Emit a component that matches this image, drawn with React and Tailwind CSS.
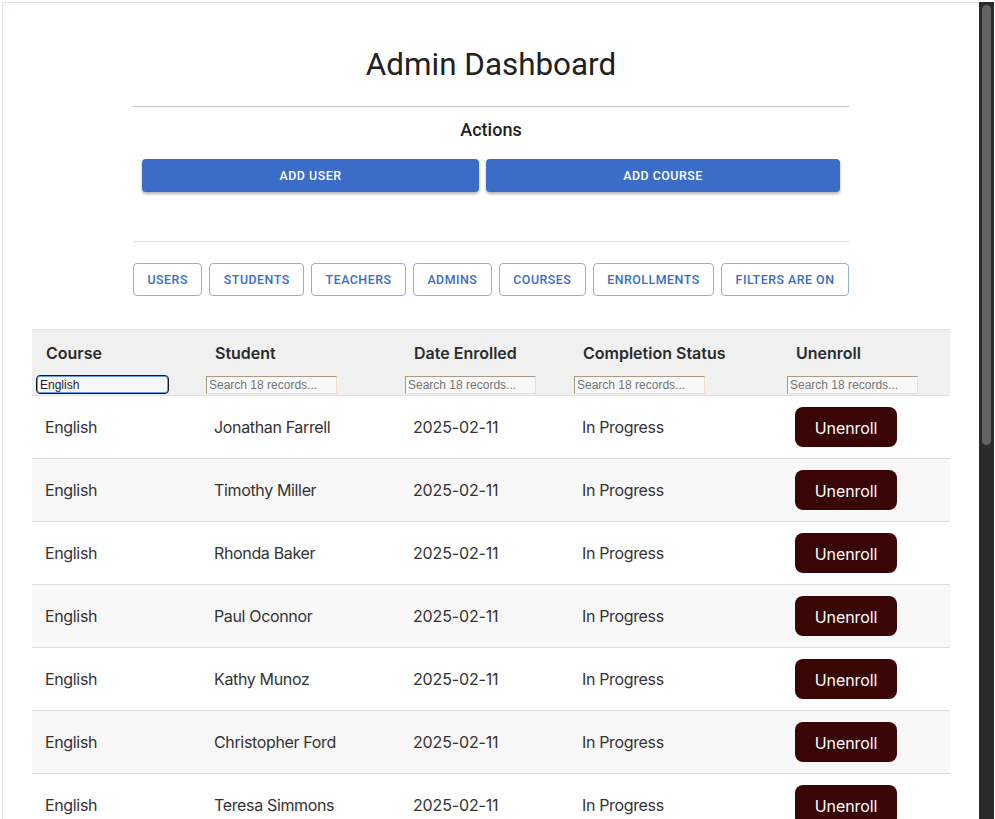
const filterButtons = ['Users', 'Students', 'Teachers', 'Admins', 'Courses', 'Enrollments', 'Filters are on']

const enrollments = [
  'Jonathan Farrell',
  'Timothy Miller',
  'Rhonda Baker',
  'Paul Oconnor',
  'Kathy Munoz',
  'Christopher Ford',
  'Teresa Simmons',
]

const columns = ['Course', 'Student', 'Date Enrolled', 'Completion Status', 'Unenroll']

function ActionButton({ label, className }) {
  return (
    <button className={`h-[33px] rounded-[4px] bg-[#3b6cc8] pt-[1px] text-[12.4px] font-medium uppercase tracking-[0.5px] text-white shadow-[0_2px_3px_rgba(0,0,0,0.3)] ${className}`}>
      {label}
    </button>
  )
}

export default function App() {
  return (
    <div className="flex h-[819px] overflow-hidden bg-white font-['Roboto',sans-serif] text-[#212121]">
      <main className="mt-[2px] ml-[2px] flex-1 rounded-tl-[3px] border-t border-l border-[#dde1e8] px-[29px]">
        <h1 className="pt-[41px] text-center text-[31.4px] leading-[42px]">Admin Dashboard</h1>

        <div className="mx-auto mt-[20px] w-[716px]">
          <hr className="border-[#bdbdbd]" />
          <h2 className="mt-[12px] text-center text-[18px] leading-[22px] font-medium">Actions</h2>
          <div className="mt-[18px] flex gap-[7px] pr-[9px] pl-[9px]">
            <ActionButton label="Add User" className="w-[337px]" />
            <ActionButton label="Add Course" className="w-[354px]" />
          </div>
          <hr className="mt-[49px] border-[#e0e0e0]" />
          <div className="mt-[21px] flex justify-between">
            {filterButtons.map((label) => (
              <button
                key={label}
                className="h-[33px] rounded-[4px] border border-[#92ace2] px-[13.5px] pt-[1px] text-[12.4px] font-medium uppercase tracking-[0.5px] text-[#3b6cc8]"
              >
                {label}
              </button>
            ))}
          </div>
        </div>

        <table className="mt-[33px] w-[918px] table-fixed border-collapse font-['Inter',sans-serif]">
          <colgroup>
            <col className="w-[169px]" />
            <col className="w-[199px]" />
            <col className="w-[169px]" />
            <col className="w-[213px]" />
            <col className="w-[168px]" />
          </colgroup>
          <thead>
            <tr className="h-[66px] border-y border-[#e0e0e0] bg-[#f0f0f0] align-top">
              {columns.map((col, i) => (
                <th key={col} className="px-[5px] text-left">
                  <div className="mt-[13px] pl-[9px] text-[16px] leading-[20px] font-semibold text-[#2b2b2b]">{col}</div>
                  {i === 0 ? (
                    <input
                      readOnly
                      value="English"
                      className="mt-[12px] ml-[-1px] block h-[19px] w-[133px] rounded-[4px] border border-[#111827] bg-[#f8f8f8] px-[3px] font-['Liberation_Sans',sans-serif] text-[12px] font-normal text-[#222] shadow-[inset_0_0_0_1px_#6d9be0] outline-none"
                    />
                  ) : (
                    <input
                      readOnly
                      placeholder="Search 18 records..."
                      className="mt-[13px] block h-[18px] w-[130.5px] border border-[#f0dfc6] border-t-[#a89c88] border-l-[#a89c88] bg-[#f8f8f8] px-[2px] font-['Liberation_Sans',sans-serif] text-[12px] font-normal placeholder:text-[#757575] outline-none"
                    />
                  )}
                </th>
              ))}
            </tr>
          </thead>
          <tbody>
            {enrollments.map((student, i) => (
              <tr key={student} className={`h-[63px] border-b border-[#dcdcdc] text-[16px] tracking-[-0.35px] text-[#333] ${i % 2 === 1 ? 'bg-[#f8f8f8]' : 'bg-white'}`}>
                <td className="pl-[13px]">English</td>
                <td className="pl-[13px]">{student}</td>
                <td className="pl-[13px] tracking-[-0.15px]">2025-02-11</td>
                <td className="pl-[13px]">In Progress</td>
                <td className="pl-[13px]">
                  <button className="h-[40px] w-[102px] rounded-[8px] bg-[#3a0505] pt-[2px] text-[16px] font-normal tracking-[-0.1px] text-white">Unenroll</button>
                </td>
              </tr>
            ))}
          </tbody>
        </table>
      </main>

      <div className="mt-[2px] mr-[1px] h-full w-[15px] shrink-0 bg-[#2b2b2b] px-[3px] pt-[3px]">
        <div className="h-[440px] rounded-full bg-[#636363]" />
      </div>
    </div>
  )
}
